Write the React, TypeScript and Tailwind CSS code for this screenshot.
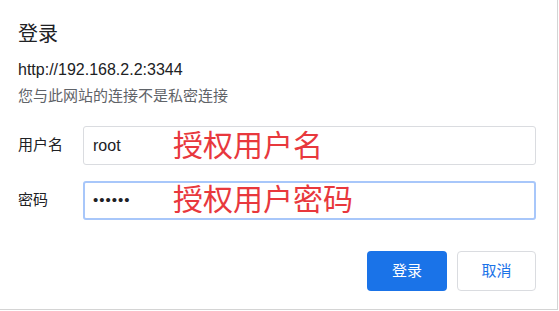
export default function App() {
  return (
    <div
      className="w-[559px] h-[311px] bg-white overflow-hidden"
      style={{ fontFamily: '"Liberation Sans", "Noto Sans CJK SC", sans-serif' }}
    >
      <div className="w-[558px] h-[310px] border-r border-b border-[#d4d4d4] pl-[18px] pr-[21px] pt-[22px]">
        {/* Título */}
        <h1 className="text-[20px] leading-[24px] text-[#202124]">登录</h1>

        {/* Origen */}
        <p className="mt-[14px] text-[16px] leading-[20px] text-[#202124]">http://192.168.2.2:3344</p>
        <p className="mt-[6px] text-[15px] leading-[20px] text-[#5f6368]">您与此网站的连接不是私密连接</p>

        {/* Campos */}
        <div className="mt-[20px] flex flex-col gap-[16px]">
          <div className="flex items-center">
            <label className="w-[65px] text-[15px] text-[#202124]">用户名</label>
            <div className="relative flex-1">
              <div className="h-[39px] border border-[#dadce0] rounded-[3px] px-[9px] flex items-center text-[16px] text-[#202124]">
                root
              </div>
              <span className="absolute left-[90px] top-[2px] text-[30px] leading-[36px] text-[#e8383d]">授权用户名</span>
            </div>
          </div>
          <div className="flex items-center">
            <label className="w-[65px] text-[15px] text-[#202124]">密码</label>
            <div className="relative flex-1">
              <div className="h-[39px] border-2 border-[#a8c7fa] rounded-[3px] px-[8px] flex items-center text-[15px] tracking-[1px] text-[#202124]">
                ••••••
              </div>
              <span className="absolute left-[90px] top-[1px] text-[30px] leading-[36px] text-[#e8383d]">授权用户密码</span>
            </div>
          </div>
        </div>

        {/* Botones */}
        <div className="mt-[31px] flex justify-end gap-[10px]">
          <button className="w-[80px] h-[40px] rounded-[4px] bg-[#1a73e8] text-white text-[15px]">登录</button>
          <button className="w-[79px] h-[40px] rounded-[4px] bg-white border border-[#dadce0] text-[#1a73e8] text-[15px]">
            取消
          </button>
        </div>
      </div>
    </div>
  );
}
